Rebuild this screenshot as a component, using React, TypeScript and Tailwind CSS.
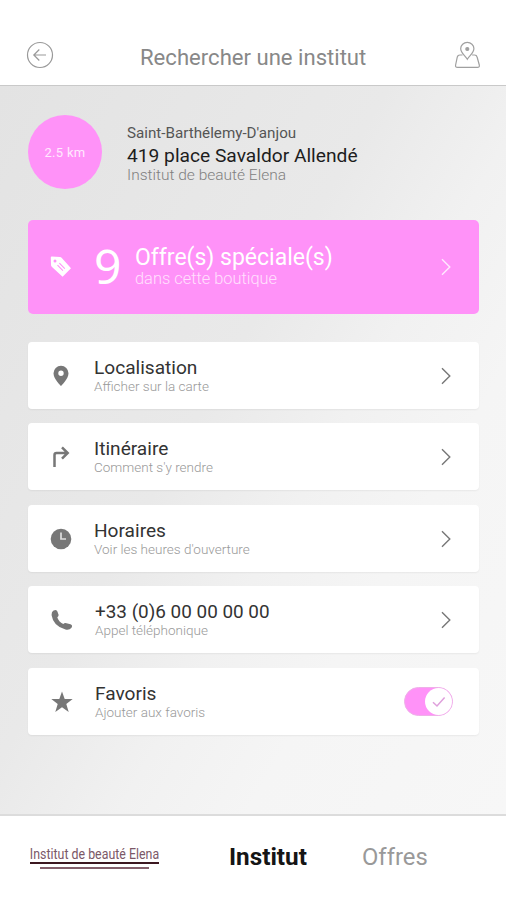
import type { ReactNode } from "react";

function Chevron({ className }: { className: string }) {
  return (
    <svg className={className} width="12" height="18" viewBox="0 0 12 18" fill="none" stroke="currentColor" strokeWidth="1.4">
      <path d="M2 1.2 9.8 9 2 16.8" />
    </svg>
  );
}

function Toggle() {
  return (
    <div className="mr-[26px] flex h-[29px] w-[49px] items-center justify-end rounded-full border border-[#eeb0e8] bg-[#ff92f8]">
      <div className="flex size-[27px] items-center justify-center rounded-full bg-white">
        <svg width="14" height="12" viewBox="0 0 14 12" fill="none" stroke="#dfa0dc" strokeWidth="1.5">
          <path d="M1 6.2 5 10 12.6 1.4" />
        </svg>
      </div>
    </div>
  );
}

interface RowProps {
  icon: ReactNode;
  title: string;
  titleClass?: string;
  subtitle: string;
  textClass?: string;
  action?: ReactNode;
}

function Row({ icon, title, titleClass = "text-[19.1px]", subtitle, textClass = "", action }: RowProps) {
  return (
    <div className="flex h-[67px] shrink-0 items-center rounded-[4px] bg-white pt-[1px] shadow-[0_1px_2px_rgba(0,0,0,0.06)]">
      <div className="flex w-[66px] shrink-0 justify-center text-[#777]">{icon}</div>
      <div className={`flex-1 whitespace-nowrap ${textClass}`}>
        <div className={`leading-[20px] text-[#333] ${titleClass}`}>{title}</div>
        <div className="text-[13.5px] font-light leading-[16px] text-[#999]">{subtitle}</div>
      </div>
      {action ?? <Chevron className="mr-[27px] text-[#777]" />}
    </div>
  );
}

export default function App() {
  return (
    <div className="flex h-[900px] w-[506px] flex-col overflow-hidden bg-white font-['Roboto',sans-serif]">
      <header className="flex h-[86px] shrink-0 items-center border-b border-[#c9c9c9] pl-[26px] pr-[25px] pt-[25px]">
        <svg className="shrink-0" width="28" height="28" viewBox="0 0 28 28" fill="none" stroke="#999" strokeWidth="1.2">
          <circle cx="14" cy="14" r="12.5" />
          <path d="M20 14H8M13.3 8.5 7.8 14l5.5 5.5" />
        </svg>
        <h1 className="ml-[86px] flex-1 whitespace-nowrap pt-[3px] text-[22.1px] leading-[28px] text-[#888]">Rechercher une institut</h1>
        <svg className="shrink-0" width="28" height="28" viewBox="0 0 28 28" fill="none" stroke="#a0a0a0" strokeWidth="1.2">
          <path d="M14.3 18.3C12 14.5 7.7 12 7.7 7.6a6.6 6.2 0 0 1 13.2 0c0 4.4-4.3 6.9-6.6 10.7Z" />
          <circle cx="14.3" cy="8" r="1.5" fill="#a0a0a0" />
          <path d="M9.5 14H6.8q-2 0-2.5 2L2.6 24q-.5 2.4 2 2.4h19.7q2.5 0 2-2.4l-2.2-8q-.5-2-2.5-2h-2.5" />
        </svg>
      </header>

      <main className="flex h-[728px] shrink-0 flex-col bg-[linear-gradient(120deg,#e3e3e3_0%,#e9e9e9_42%,#f1f1f1_58%,#f5f5f5_72%,#f7f7f7_100%)] pl-[28px] pr-[27px] pt-[29px]">
        <section className="flex h-[74px] shrink-0">
          <div className="flex size-[74px] shrink-0 items-center justify-center rounded-full bg-[#ff92f8] pt-[2px] text-[13px] tracking-[0.3px] text-[#ffe9fe]">2.5 km</div>
          <div className="ml-[25px] whitespace-nowrap pt-[9px]">
            <div className="text-[15.2px] leading-[19px] text-[#555]">Saint-Barthélemy-D'anjou</div>
            <div className="pt-[1px] text-[19.2px] leading-[24px] text-[#1d1d1d]">419 place Savaldor Allendé</div>
            <div className="text-[15.5px] font-light leading-[15px] text-[#808080]">Institut de beauté Elena</div>
          </div>
        </section>

        <section className="mt-[31px] flex h-[94px] shrink-0 items-center rounded-[5px] bg-[#ff92f8] text-white">
          <div className="flex w-[66px] shrink-0 justify-center">
            <svg width="22" height="22" viewBox="0 0 22 22">
              <path fill="#fff" d="M.8 1.5Q.8.6 1.8.6L10 1Q11 1.1 11.8 1.9L21 12.2 12.6 20.8 2 11Q1 10 1 9Z" />
              <circle cx="5" cy="5" r="1.5" fill="#ff92f8" />
              <path d="m9.4 7.2 5.4 5.500M7.500 9.200l5.400 5.500" stroke="#ff92f8" strokeWidth="1.1" fill="none" />
            </svg>
          </div>
          <div className="w-[41px] pb-[3px] font-['Noto_Sans',sans-serif] text-[48px] leading-[50px]">9</div>
          <div className="flex-1 whitespace-nowrap pb-[1px]">
            <div className="text-[23px] leading-[25px]">Offre(s) spéciale(s)</div>
            <div className="text-[16.4px] font-light leading-[18px] text-[#ffe0fd]">dans cette boutique</div>
          </div>
          <Chevron className="mr-[27px] text-[#ffe9fe]" />
        </section>

        <section className="mt-[27.5px] flex shrink-0 flex-col gap-[14.6px]">
          <Row
            icon={
              <svg width="16" height="22" viewBox="0 0 16 22">
                <path fill="currentColor" fillRule="evenodd" d="M8 .8a7.5 7.5 0 0 1 7.5 7.5C15.5 14 8 21 8 21S.5 14 .5 8.3A7.5 7.5 0 0 1 8 .8Zm0 4.7a2.7 2.7 0 1 0 0 5.4 2.7 2.7 0 0 0 0-5.4Z" />
              </svg>
            }
            title="Localisation"
            subtitle="Afficher sur la carte"
          />
          <Row
            icon={
              <svg width="18" height="22" viewBox="0 0 18 22" fill="none" stroke="currentColor" strokeWidth="2.5">
                <path d="M2.5 21V9q0-2 2-2h11M10 1.3 15.7 7 10 12.7" />
              </svg>
            }
            title="Itinéraire"
            subtitle="Comment s'y rendre"
          />
          <Row
            icon={
              <svg width="22" height="22" viewBox="0 0 22 22">
                <circle cx="11" cy="11" r="10.3" fill="currentColor" />
                <path d="M11 4.5V11h5" fill="none" stroke="#ddd" strokeWidth="1.7" />
              </svg>
            }
            title="Horaires"
            subtitle="Voir les heures d'ouverture"
          />
          <Row
            icon={
              <svg className="ml-[2px]" width="22" height="22" viewBox="0 0 22 22">
                <path fill="currentColor" d="M2.2 1.8Q5.6-.2 6.4 2.6L7.5 5.6Q7.9 7.2 6.3 8.3Q7.5 12.8 12.3 15.1Q13.5 13.6 15.5 14.2L19.5 15.3Q22 16.2 20.5 18.7Q18.5 21.5 14.5 20.6Q2.2 17.2.6 6.3Q.4 3.2 2.2 1.8Z" />
              </svg>
            }
            title="+33 (0)6 00 00 00 00"
            titleClass="text-[18.9px]"
            subtitle="Appel téléphonique"
            textClass="pl-[1px]"
          />
          <Row
            icon={
              <svg className="ml-[2px]" width="22" height="22" viewBox="0 0 22 22">
                <path fill="currentColor" d="m11 .4 2.7 7.6h8l-6.4 4.9 2.4 8L11 16.2l-6.7 4.7 2.4-8L.3 8h8Z" />
              </svg>
            }
            title="Favoris"
            subtitle="Ajouter aux favoris"
            textClass="pl-[1px]"
            action={<Toggle />}
          />
        </section>
      </main>

      <footer className="flex h-[86px] shrink-0 items-center border-t-2 border-[#dcdcdc] pb-[3px] pl-[29px]">
        <div className="flex w-[131px] shrink-0 flex-col items-center">
          <div className="scale-y-[1.15] whitespace-nowrap text-[12.4px] leading-[17px] text-[#7b5868]">Institut de beauté Elena</div>
          <div className="h-[2px] w-[129px] bg-[#3c1820]" />
          <div className="mt-[3px] h-[2px] w-[109px] bg-[#85606c]" />
        </div>
        <div className="ml-[69px] w-[133px] whitespace-nowrap text-[24.3px] font-bold leading-[28px] text-[#151515]">Institut</div>
        <div className="whitespace-nowrap text-[23.8px] leading-[28px] text-[#999]">Offres</div>
      </footer>
    </div>
  );
}
